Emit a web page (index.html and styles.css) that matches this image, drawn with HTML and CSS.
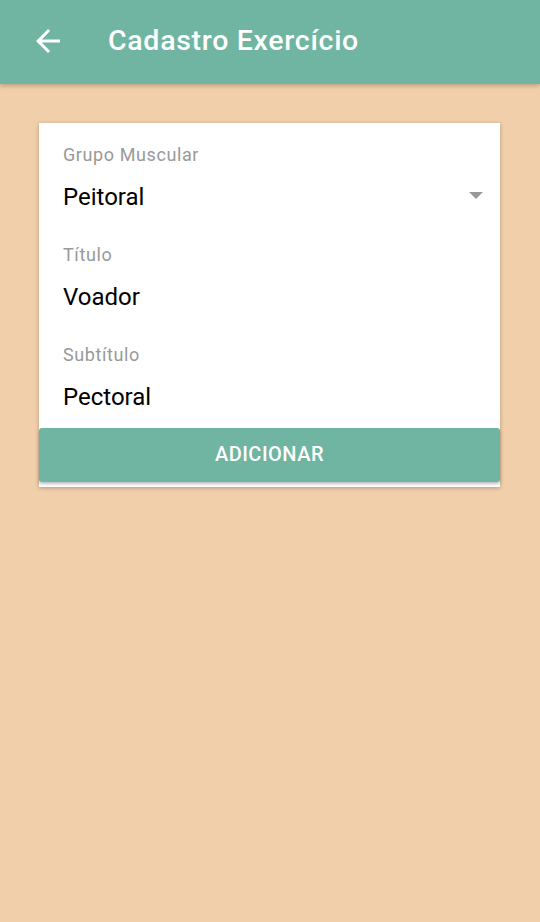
FILE: index.html
```html
<!DOCTYPE html>
<html lang="pt">
<head>
<meta charset="utf-8">
<title>Cadastro Exercício</title>
<link rel="stylesheet" href="styles.css">
</head>
<body>
<header class="appbar">
  <svg class="back" viewBox="0 0 24 24" width="36" height="36"><path d="M20 11H7.83l5.59-5.59L12 4l-8 8 8 8 1.41-1.41L7.83 13H20v-2z" fill="#fff"/></svg>
  <h1 class="title">Cadastro Exercício</h1>
</header>
<main class="content">
  <section class="card">
    <div class="field">
      <div class="label">Grupo Muscular</div>
      <div class="value select"><span>Peitoral</span><span class="caret"></span></div>
    </div>
    <div class="field">
      <div class="label">Título</div>
      <div class="value">Voador</div>
    </div>
    <div class="field">
      <div class="label">Subtítulo</div>
      <div class="value">Pectoral</div>
    </div>
    <button class="btn">ADICIONAR</button>
  </section>
</main>
</body>
</html>
```
FILE: styles.css
```css
html, body { margin: 0; padding: 0; }
body {
  background: #f0cfaa;
  font-family: Roboto, "Noto Sans", sans-serif;
  width: 540px;
  height: 922px;
  overflow: hidden;
}
.appbar {
  height: 84px;
  background: #6fb5a1;
  display: flex;
  align-items: center;
  box-shadow: 0 2px 4px rgba(0,0,0,0.22);
  position: relative;
}
.back { margin-left: 30px; margin-top: -2px; flex: none; }
.title {
  margin: 0 0 0 42px;
  color: #fff;
  font-size: 28.5px;
  font-weight: 500;
  letter-spacing: 0.7px;
  margin-top: -3px;
}
.content { padding: 39px 40px 0 39px; }
.card {
  background: #fff;
  box-shadow: 0 1px 4px rgba(0,0,0,0.25);
  padding: 21px 0 5px;
  display: flex;
  flex-direction: column;
}
.field { padding: 0 17px 0 24px; height: 100px; }
.field:last-of-type { height: 84px; }
.label {
  color: #999;
  font-size: 18px;
  line-height: 22px;
  letter-spacing: 0.6px;
}
.value {
  color: #000;
  font-size: 24px;
  line-height: 30px;
  margin-top: 16px;
}
.select { display: flex; justify-content: space-between; align-items: center; }
.caret {
  width: 0; height: 0;
  border-left: 7px solid transparent;
  border-right: 7px solid transparent;
  border-top: 7px solid #999;
  margin-top: -3px;
}
.btn {
  height: 54px;
  border: none;
  border-radius: 3px;
  background: #6fb5a1;
  color: #fff;
  font-family: Roboto, sans-serif;
  font-size: 20px;
  font-weight: 500;
  letter-spacing: 0.5px;
  box-shadow: 0 2px 3px rgba(0,0,0,0.25);
  padding: 0 0 3px;
}
```
